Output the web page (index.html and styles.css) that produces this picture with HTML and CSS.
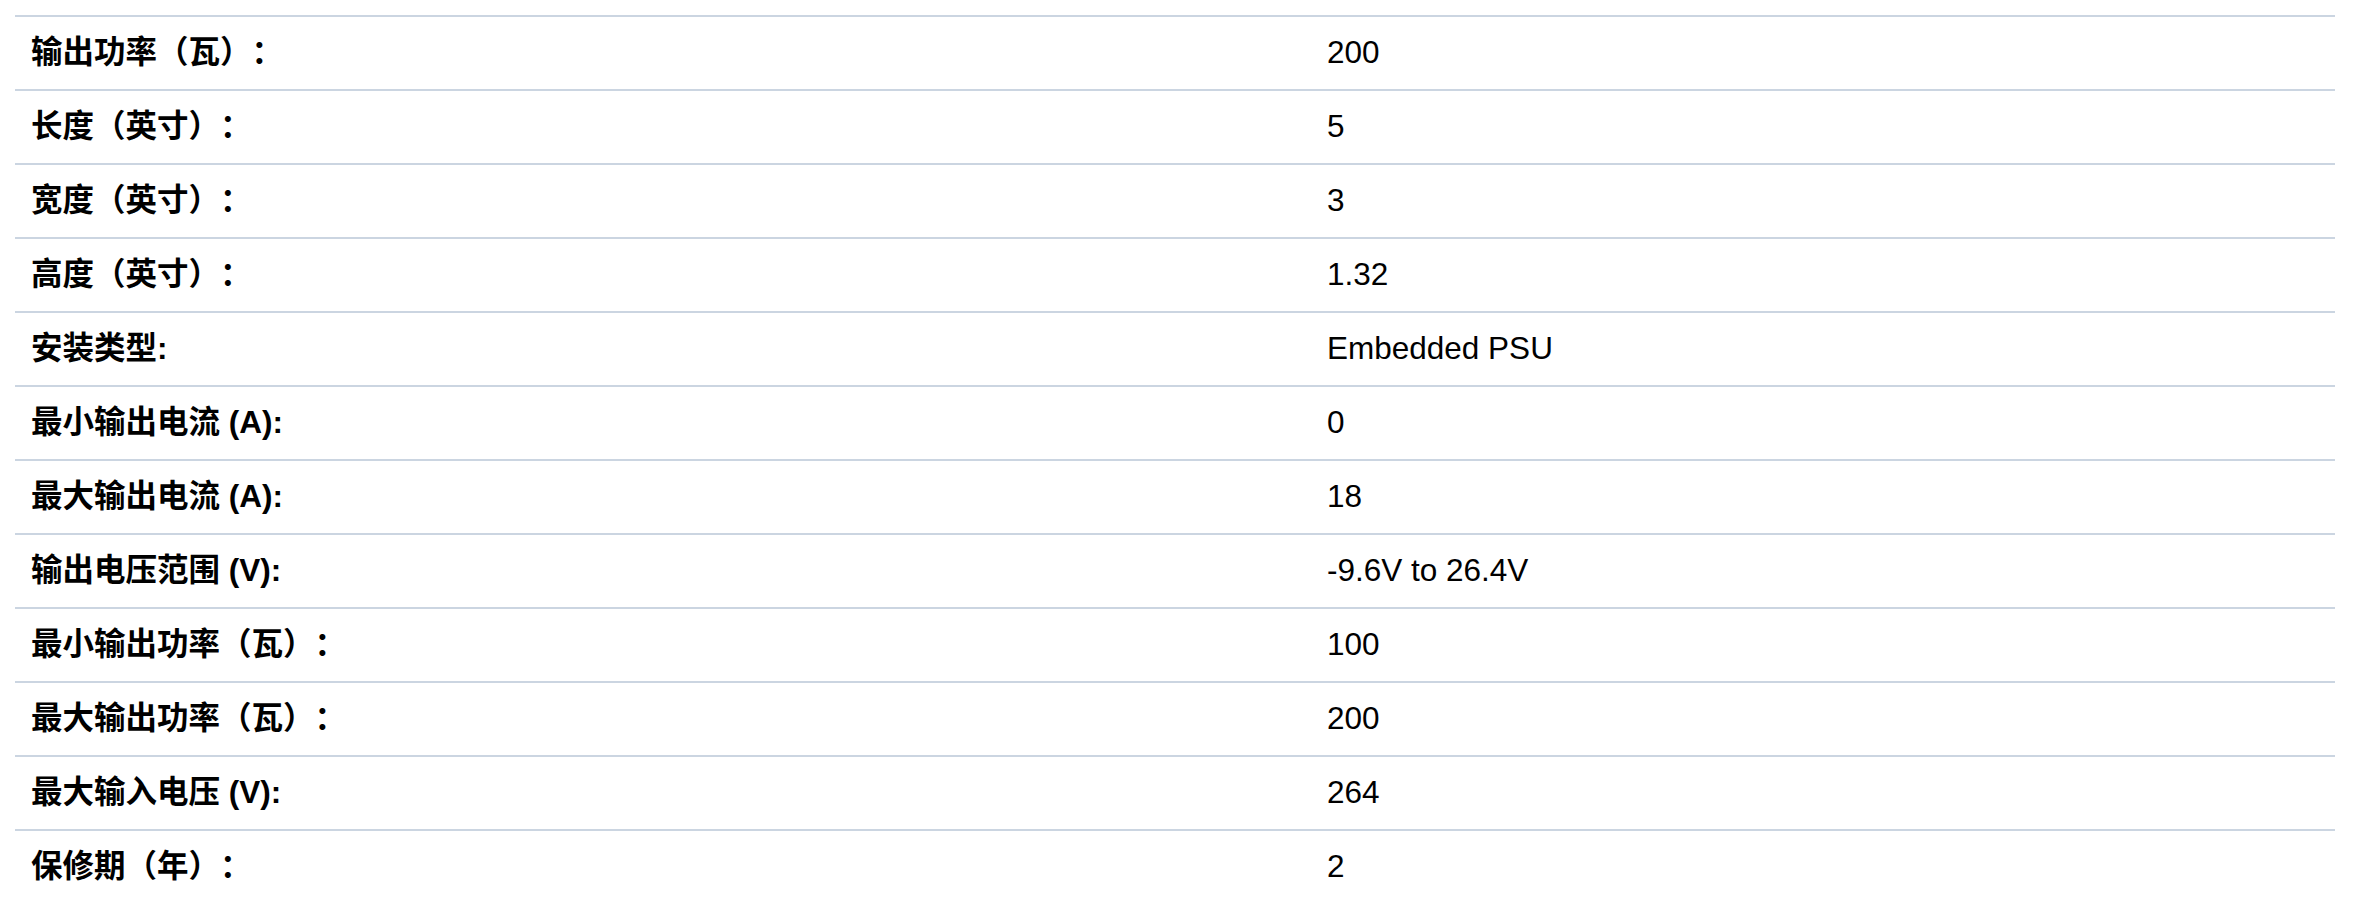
FILE: index.html
```html
<!DOCTYPE html>
<html lang="zh-CN">
<head>
<meta charset="utf-8">
<title>规格</title>
<link rel="stylesheet" href="styles.css">
</head>
<body>
<div class="page">
  <div class="spec-list">
    <div class="spec-row"><div class="spec-label">输出功率（瓦）：</div><div class="spec-value">200</div></div>
    <div class="spec-row"><div class="spec-label">长度（英寸）：</div><div class="spec-value">5</div></div>
    <div class="spec-row"><div class="spec-label">宽度（英寸）：</div><div class="spec-value">3</div></div>
    <div class="spec-row"><div class="spec-label">高度（英寸）：</div><div class="spec-value">1.32</div></div>
    <div class="spec-row"><div class="spec-label">安装类型:</div><div class="spec-value">Embedded PSU</div></div>
    <div class="spec-row"><div class="spec-label">最小输出电流 (A):</div><div class="spec-value">0</div></div>
    <div class="spec-row"><div class="spec-label">最大输出电流 (A):</div><div class="spec-value">18</div></div>
    <div class="spec-row"><div class="spec-label">输出电压范围 (V):</div><div class="spec-value">-9.6V to 26.4V</div></div>
    <div class="spec-row"><div class="spec-label">最小输出功率（瓦）：</div><div class="spec-value">100</div></div>
    <div class="spec-row"><div class="spec-label">最大输出功率（瓦）：</div><div class="spec-value">200</div></div>
    <div class="spec-row"><div class="spec-label">最大输入电压 (V):</div><div class="spec-value">264</div></div>
    <div class="spec-row"><div class="spec-label">保修期（年）：</div><div class="spec-value">2</div></div>
  </div>
</div>
</body>
</html>
```

FILE: styles.css
```css
html, body {
  margin: 0;
  padding: 0;
  background: #ffffff;
}

body {
  font-family: "Liberation Sans", Arial, "Noto Sans CJK SC", sans-serif;
  font-size: 31.5px;
  color: #000000;
  text-spacing-trim: space-all;
}

.page {
  padding: 15px 28px 0 15px;
}

.spec-list {
  display: flex;
  flex-direction: column;
}

.spec-row {
  display: grid;
  grid-template-columns: 1296px 1fr;
  align-items: center;
  height: 72px;
  border-top: 2px solid #cbd5e1;
}

.spec-label,
.spec-value {
  padding: 0 16px;
  line-height: 1.2;
  white-space: nowrap;
}

.spec-label {
  font-weight: 700;
  text-spacing-trim: space-all;
}

.spec-value {
  font-weight: 400;
}
```
